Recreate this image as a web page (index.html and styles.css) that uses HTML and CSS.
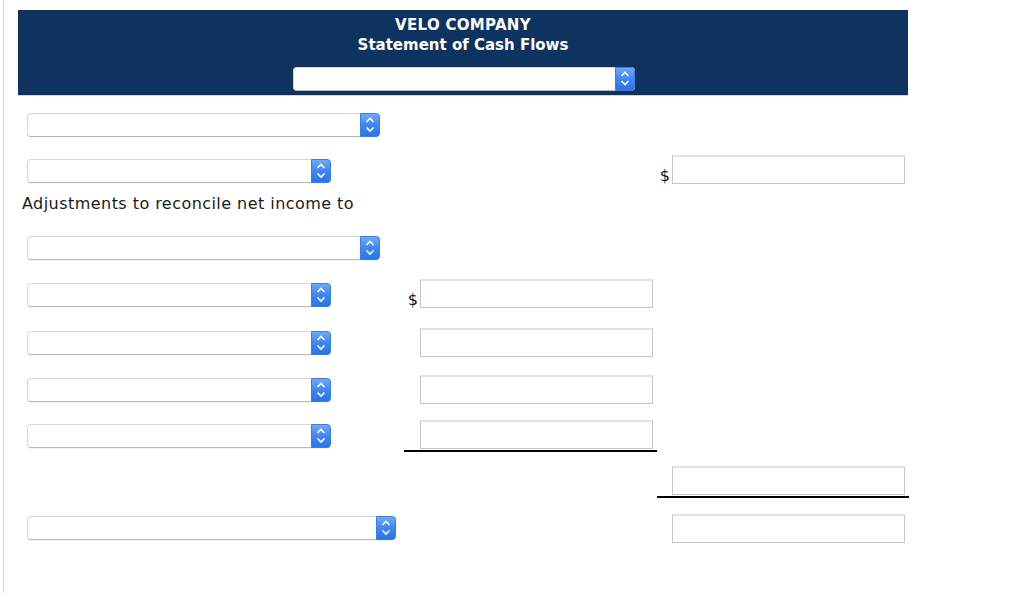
FILE: index.html
```html
<!DOCTYPE html>
<html>
<head>
<meta charset="utf-8">
<link rel="stylesheet" href="styles.css">
</head>
<body>
<div class="page">
  <div class="header">
    <div class="title">VELO COMPANY</div>
    <div class="title">Statement of Cash Flows</div>
    <div class="select hdr-select"><span class="arrow"><svg width="20" height="23" viewBox="0 0 20 23"><path d="M6.5 9 L10 5.5 L13.5 9 M6.5 14 L10 17.5 L13.5 14" fill="none" stroke="#fff" stroke-width="1.6"/></svg></span></div>
  </div>

  <div class="sheet">
    <div class="row r46">
      <div class="c1"><div class="select w-wide"><span class="arrow"><svg width="20" height="24" viewBox="0 0 20 24"><path d="M6.5 9 L10 5.5 L13.5 9 M6.5 14.5 L10 18 L13.5 14.5" fill="none" stroke="#fff" stroke-width="1.6"/></svg></span></div></div>
      <div class="c2"></div>
      <div class="c3"></div>
    </div>
    <div class="row r46">
      <div class="c1"><div class="select w-narrow"><span class="arrow"><svg width="20" height="24" viewBox="0 0 20 24"><path d="M6.5 9 L10 5.5 L13.5 9 M6.5 14.5 L10 18 L13.5 14.5" fill="none" stroke="#fff" stroke-width="1.6"/></svg></span></div></div>
      <div class="c2"></div>
      <div class="c3 amt lead"><span class="dollar">$</span><div class="input"></div></div>
    </div>
    <div class="row r-text">
      <div class="c1 label">Adjustments to reconcile net income to</div>
    </div>
    <div class="row r47">
      <div class="c1"><div class="select w-wide"><span class="arrow"><svg width="20" height="24" viewBox="0 0 20 24"><path d="M6.5 9 L10 5.5 L13.5 9 M6.5 14.5 L10 18 L13.5 14.5" fill="none" stroke="#fff" stroke-width="1.6"/></svg></span></div></div>
      <div class="c2"></div>
      <div class="c3"></div>
    </div>
    <div class="row r48">
      <div class="c1"><div class="select w-narrow"><span class="arrow"><svg width="20" height="24" viewBox="0 0 20 24"><path d="M6.5 9 L10 5.5 L13.5 9 M6.5 14.5 L10 18 L13.5 14.5" fill="none" stroke="#fff" stroke-width="1.6"/></svg></span></div></div>
      <div class="c2 amt lead"><span class="dollar">$</span><div class="input"></div></div>
      <div class="c3"></div>
    </div>
    <div class="row r47">
      <div class="c1"><div class="select w-narrow"><span class="arrow"><svg width="20" height="24" viewBox="0 0 20 24"><path d="M6.5 9 L10 5.5 L13.5 9 M6.5 14.5 L10 18 L13.5 14.5" fill="none" stroke="#fff" stroke-width="1.6"/></svg></span></div></div>
      <div class="c2 amt"><div class="input"></div></div>
      <div class="c3"></div>
    </div>
    <div class="row r47">
      <div class="c1"><div class="select w-narrow"><span class="arrow"><svg width="20" height="24" viewBox="0 0 20 24"><path d="M6.5 9 L10 5.5 L13.5 9 M6.5 14.5 L10 18 L13.5 14.5" fill="none" stroke="#fff" stroke-width="1.6"/></svg></span></div></div>
      <div class="c2 amt"><div class="input"></div></div>
      <div class="c3"></div>
    </div>
    <div class="row r46">
      <div class="c1"><div class="select w-narrow"><span class="arrow"><svg width="20" height="24" viewBox="0 0 20 24"><path d="M6.5 9 L10 5.5 L13.5 9 M6.5 14.5 L10 18 L13.5 14.5" fill="none" stroke="#fff" stroke-width="1.6"/></svg></span></div></div>
      <div class="c2 amt total"><div class="input"></div></div>
      <div class="c3"></div>
    </div>
    <div class="row r46">
      <div class="c1"></div>
      <div class="c2"></div>
      <div class="c3 amt total"><div class="input"></div></div>
    </div>
    <div class="row r46">
      <div class="c1"><div class="select w-last"><span class="arrow"><svg width="20" height="24" viewBox="0 0 20 24"><path d="M6.5 9 L10 5.5 L13.5 9 M6.5 14.5 L10 18 L13.5 14.5" fill="none" stroke="#fff" stroke-width="1.6"/></svg></span></div></div>
      <div class="c2"></div>
      <div class="c3 amt"><div class="input"></div></div>
    </div>
  </div>
</div>
</body>
</html>
```

FILE: styles.css
```css
html, body {
  margin: 0;
  padding: 0;
  background: #fff;
}

body {
  font-family: "DejaVu Sans", Verdana, sans-serif;
  color: #111;
}

.page {
  margin-left: 3px;
  border-left: 1px solid #d3d9e8;
  min-height: 593px;
  padding-left: 14px;
  padding-top: 10px;
  box-sizing: border-box;
}

.header {
  width: 890px;
  height: 85px;
  background: #0f3360;
  border-bottom: 1px solid #d6d6d6;
  box-sizing: content-box;
  display: flex;
  flex-direction: column;
  align-items: center;
}

.title {
  color: #fff;
  font-weight: bold;
  font-size: 15px;
  line-height: 20px;
}

.title:first-child {
  margin-top: 5px;
  letter-spacing: 0.3px;
}

.hdr-select {
  margin-top: 12px;
  width: 342px;
  height: 23px;
  margin-left: 1px;
}

.sheet {
  margin-top: 6px;
}

.row {
  display: grid;
  grid-template-columns: 386px 253px 252px;
  align-items: center;
}

.r46 { height: 46px; }
.r47 { height: 47px; }
.r48 { height: 48px; }

.r-text {
  height: 30px;
  align-items: start;
}

.c1 {
  padding-left: 9px;
}

.label {
  padding-left: 4px;
  font-size: 16px;
  line-height: 20px;
  letter-spacing: 0.45px;
  color: #1a1a1a;
  white-space: nowrap;
}

.select {
  position: relative;
  box-sizing: border-box;
  height: 24px;
  background: #fff;
  border: 1px solid #d6d6d6;
  border-bottom-color: #b9b9b9;
  border-radius: 4px;
  box-shadow: 0 1px 0 rgba(0, 0, 0, 0.04);
}

.w-wide { width: 353px; }
.w-narrow { width: 304px; }
.w-last { width: 369px; }

.arrow {
  position: absolute;
  top: -1px;
  right: -1px;
  bottom: -1px;
  width: 20px;
  border-radius: 0 4px 4px 0;
  background: linear-gradient(#6eaaf8, #3f86f2 50%, #2a74ea);
  border: 1px solid #3a7de6;
  box-sizing: border-box;
}

.arrow svg {
  display: block;
  position: absolute;
  top: -1px;
  left: -1px;
}

.amt {
  display: flex;
  align-items: flex-end;
  justify-content: flex-end;
  padding-right: 4px;
}

.lead {
  margin-bottom: 3px;
}

.dollar {
  font-size: 16px;
  line-height: 16px;
  margin-right: 2px;
  color: #111;
}

.input {
  width: 233px;
  height: 29px;
  box-sizing: border-box;
  border: 1px solid #c6c6c6;
  border-top: 2px solid #e2e2e2;
  background: #fff;
}

.total {
  border-bottom: 2px solid #000;
  padding-bottom: 1px;
}
```
